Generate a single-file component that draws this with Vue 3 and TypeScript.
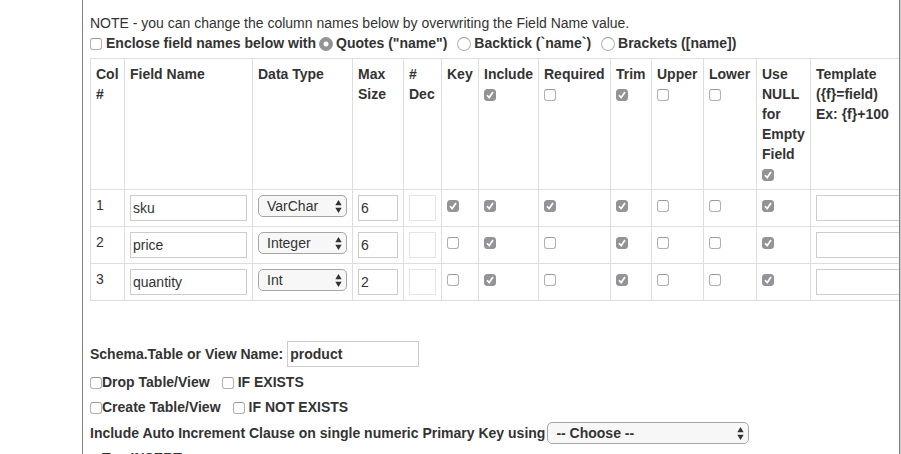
<script setup lang="ts">
import { reactive, ref } from 'vue'

type Flag = 'key' | 'include' | 'required' | 'trim' | 'upper' | 'lower' | 'useNull'

interface FieldRow {
  name: string
  type: string
  size: string
  dec: string
  template: string
  flags: Record<Flag, boolean>
}

const flagColumns: { id: Flag; label: string; toggle: boolean }[] = [
  { id: 'key', label: 'Key', toggle: false },
  { id: 'include', label: 'Include', toggle: true },
  { id: 'required', label: 'Required', toggle: true },
  { id: 'trim', label: 'Trim', toggle: true },
  { id: 'upper', label: 'Upper', toggle: true },
  { id: 'lower', label: 'Lower', toggle: true },
  { id: 'useNull', label: 'Use NULL for Empty Field', toggle: true },
]

const dataTypes = ['VarChar', 'Char', 'Integer', 'Int', 'Decimal', 'Date']

const quoteStyles = [
  { id: 'quotes', label: 'Quotes ("name")' },
  { id: 'backtick', label: 'Backtick (`name`)' },
  { id: 'brackets', label: 'Brackets ([name])' },
]

function makeRow(name: string, type: string, size: string, isKey: boolean): FieldRow {
  return {
    name,
    type,
    size,
    dec: '',
    template: '',
    flags: {
      key: isKey,
      include: true,
      required: isKey,
      trim: true,
      upper: false,
      lower: false,
      useNull: true,
    },
  }
}

const rows = reactive<FieldRow[]>([
  makeRow('sku', 'VarChar', '6', true),
  makeRow('price', 'Integer', '6', false),
  makeRow('quantity', 'Int', '2', false),
])

const allFlags = reactive<Record<Flag, boolean>>({
  key: false,
  include: true,
  required: false,
  trim: true,
  upper: false,
  lower: false,
  useNull: true,
})

const enclose = ref(false)
const quoteStyle = ref('quotes')
const tableName = ref('product')
const dropTable = ref(false)
const ifExists = ref(false)
const createTable = ref(false)
const ifNotExists = ref(false)
const autoIncrement = ref('')
const topInsert = ref(false)

function toggleAll(id: Flag) {
  rows.forEach((row) => {
    row.flags[id] = allFlags[id]
  })
}
</script>

<template>
  <main class="panel">
    <p class="note">NOTE - you can change the column names below by overwriting the Field Name value.</p>
    <div class="enclose">
      <label class="choice"><input v-model="enclose" type="checkbox" />Enclose field names below with</label>
      <label v-for="q in quoteStyles" :key="q.id" class="choice quote">
        <input v-model="quoteStyle" type="radio" name="quote" :value="q.id" />{{ q.label }}
      </label>
    </div>

    <table class="fields">
      <colgroup>
        <col class="c-num" />
        <col class="c-name" />
        <col class="c-type" />
        <col class="c-size" />
        <col class="c-dec" />
        <col v-for="c in flagColumns" :key="c.id" :class="'c-' + c.id" />
        <col class="c-template" />
      </colgroup>
      <thead>
        <tr>
          <th>Col #</th>
          <th>Field Name</th>
          <th>Data Type</th>
          <th>Max Size</th>
          <th># Dec</th>
          <th v-for="c in flagColumns" :key="c.id">
            <label>{{ c.label }}<span v-if="c.toggle" class="tick"><input
              v-model="allFlags[c.id]"
              type="checkbox"
              @change="toggleAll(c.id)"
            /></span></label>
          </th>
          <th>Template<br />({f}=field)<br />Ex: {f}+100</th>
        </tr>
      </thead>
      <tbody>
        <tr v-for="(row, i) in rows" :key="i">
          <td>{{ i + 1 }}</td>
          <td><input v-model="row.name" class="text" type="text" aria-label="Field Name" /></td>
          <td>
            <select v-model="row.type" aria-label="Data Type">
              <option v-for="t in dataTypes" :key="t">{{ t }}</option>
            </select>
          </td>
          <td><input v-model="row.size" class="text" type="text" aria-label="Max Size" /></td>
          <td><input v-model="row.dec" class="text" type="text" aria-label="Decimals" disabled /></td>
          <td v-for="c in flagColumns" :key="c.id">
            <span class="tick"><input v-model="row.flags[c.id]" type="checkbox" :aria-label="c.label" /></span>
          </td>
          <td><input v-model="row.template" class="text" type="text" aria-label="Template" /></td>
        </tr>
      </tbody>
    </table>

    <div class="options">
      <label class="line name-line">
        Schema.Table or View Name:
        <input v-model="tableName" class="text" type="text" />
      </label>
      <div class="line pair">
        <label class="choice tight"><input v-model="dropTable" type="checkbox" />Drop Table/View</label>
        <label class="choice"><input v-model="ifExists" type="checkbox" />IF EXISTS</label>
      </div>
      <div class="line pair">
        <label class="choice tight"><input v-model="createTable" type="checkbox" />Create Table/View</label>
        <label class="choice"><input v-model="ifNotExists" type="checkbox" />IF NOT EXISTS</label>
      </div>
      <label class="line increment">
        Include Auto Increment Clause on single numeric Primary Key using
        <select v-model="autoIncrement">
          <option value="">-- Choose --</option>
          <option>IDENTITY</option>
          <option>AUTO_INCREMENT</option>
        </select>
      </label>
      <div class="line insert">
        <label class="choice tight"><input v-model="topInsert" type="checkbox" />Top INSERT</label>
      </div>
    </div>
  </main>
</template>

<style>
body {
  background: #fff;
}
html,
body {
  height: 100%;
  overflow: hidden;
}
#app {
  height: 100%;
}
</style>

<style scoped>
.panel {
  box-sizing: border-box;
  min-height: 100%;
  margin: 0 1px 0 82px;
  padding: 13px 0 0 7px;
  border: solid #808080;
  border-width: 0 1px;
  box-shadow: 1px 0 #ccc;
  overflow: hidden;
  color: #333;
  font: 14px/20px "Helvetica Neue", "Liberation Sans", Arial, sans-serif;
}
.note {
  margin: 0;
}
.enclose {
  display: flex;
  height: 20px;
  margin-bottom: 5px;
  font-weight: bold;
  white-space: nowrap;
}
.choice {
  display: flex;
  align-items: center;
  gap: 4px;
}
.tight {
  gap: 0;
}
.quote {
  gap: 3px;
  margin-left: 3px;
}
.quote + .quote {
  margin-left: 10px;
}

input,
select {
  box-sizing: border-box;
  margin: 0;
  color: #333;
  font: inherit;
}
input[type='checkbox'],
input[type='radio'] {
  appearance: none;
  flex: none;
  margin-top: 2px;
  border: 1px solid #b0b0b0;
  border-top-color: #999;
  background: #fff;
}
input[type='checkbox'] {
  width: 12px;
  height: 12px;
  border-radius: 3px;
}
input[type='checkbox']:checked {
  border-color: #949398;
  background: #949398
    url("data:image/svg+xml,%3Csvg xmlns='http://www.w3.org/2000/svg' viewBox='0 0 10 10'%3E%3Cpath d='M2 5.2 4.2 7.6 8 2' fill='none' stroke='white' stroke-width='1.7'/%3E%3C/svg%3E")
    center / 10px no-repeat;
}
input[type='radio'] {
  width: 14px;
  height: 14px;
  border-radius: 50%;
}
input[type='radio']:checked {
  border-color: #949398;
  background: radial-gradient(circle, #fff 2px, #949398 3px);
}
.text {
  display: block;
  width: 100%;
  height: 26px;
  padding: 2px;
  border: 1px solid #ccc;
  border-radius: 0;
  background: #fff;
}
.text:disabled {
  border-color: #e4e4e4;
}
select {
  appearance: none;
  display: block;
  width: 100%;
  height: 22px;
  padding: 0 20px 0 8px;
  border: 1px solid #a6a6a6;
  border-radius: 5px;
  background: #f7f7f7
    url("data:image/svg+xml,%3Csvg xmlns='http://www.w3.org/2000/svg' viewBox='0 0 7 13'%3E%3Cpath d='M0.3 5.3 3.5 0 6.7 5.3zM0.3 7.7 3.5 13 6.7 7.7z' fill='%23333'/%3E%3C/svg%3E")
    right 4px center / 7px 13px no-repeat;
}

.fields {
  width: 840px;
  border-collapse: collapse;
  table-layout: fixed;
}
.c-num { width: 34px; }
.c-name { width: 128px; }
.c-type { width: 100px; }
.c-size { width: 51px; }
.c-dec { width: 38px; }
.c-key { width: 37px; }
.c-include { width: 60px; }
.c-required { width: 72px; }
.c-trim { width: 41px; }
.c-upper { width: 52px; }
.c-lower { width: 53px; }
.c-useNull { width: 54px; }
th,
td {
  padding: 5px;
  border: 1px solid #ddd;
  text-align: left;
  vertical-align: top;
}
th {
  font-weight: bold;
}
.tick {
  display: flex;
  align-items: center;
  height: 20px;
}

.options {
  margin-top: 39px;
  font-weight: bold;
  white-space: nowrap;
}
.line {
  display: flex;
  align-items: center;
}
.name-line {
  gap: 4px;
  height: 28px;
  margin-bottom: 1px;
}
.name-line .text {
  width: 132px;
}
.pair {
  gap: 12px;
  height: 25px;
}
.increment {
  gap: 2px;
  height: 26px;
  margin-top: 1px;
}
.increment select {
  width: 202px;
}
.insert {
  height: 24px;
}
.insert .choice {
  align-items: flex-start;
}
.insert input[type='checkbox'] {
  margin-top: 6px;
}
</style>
